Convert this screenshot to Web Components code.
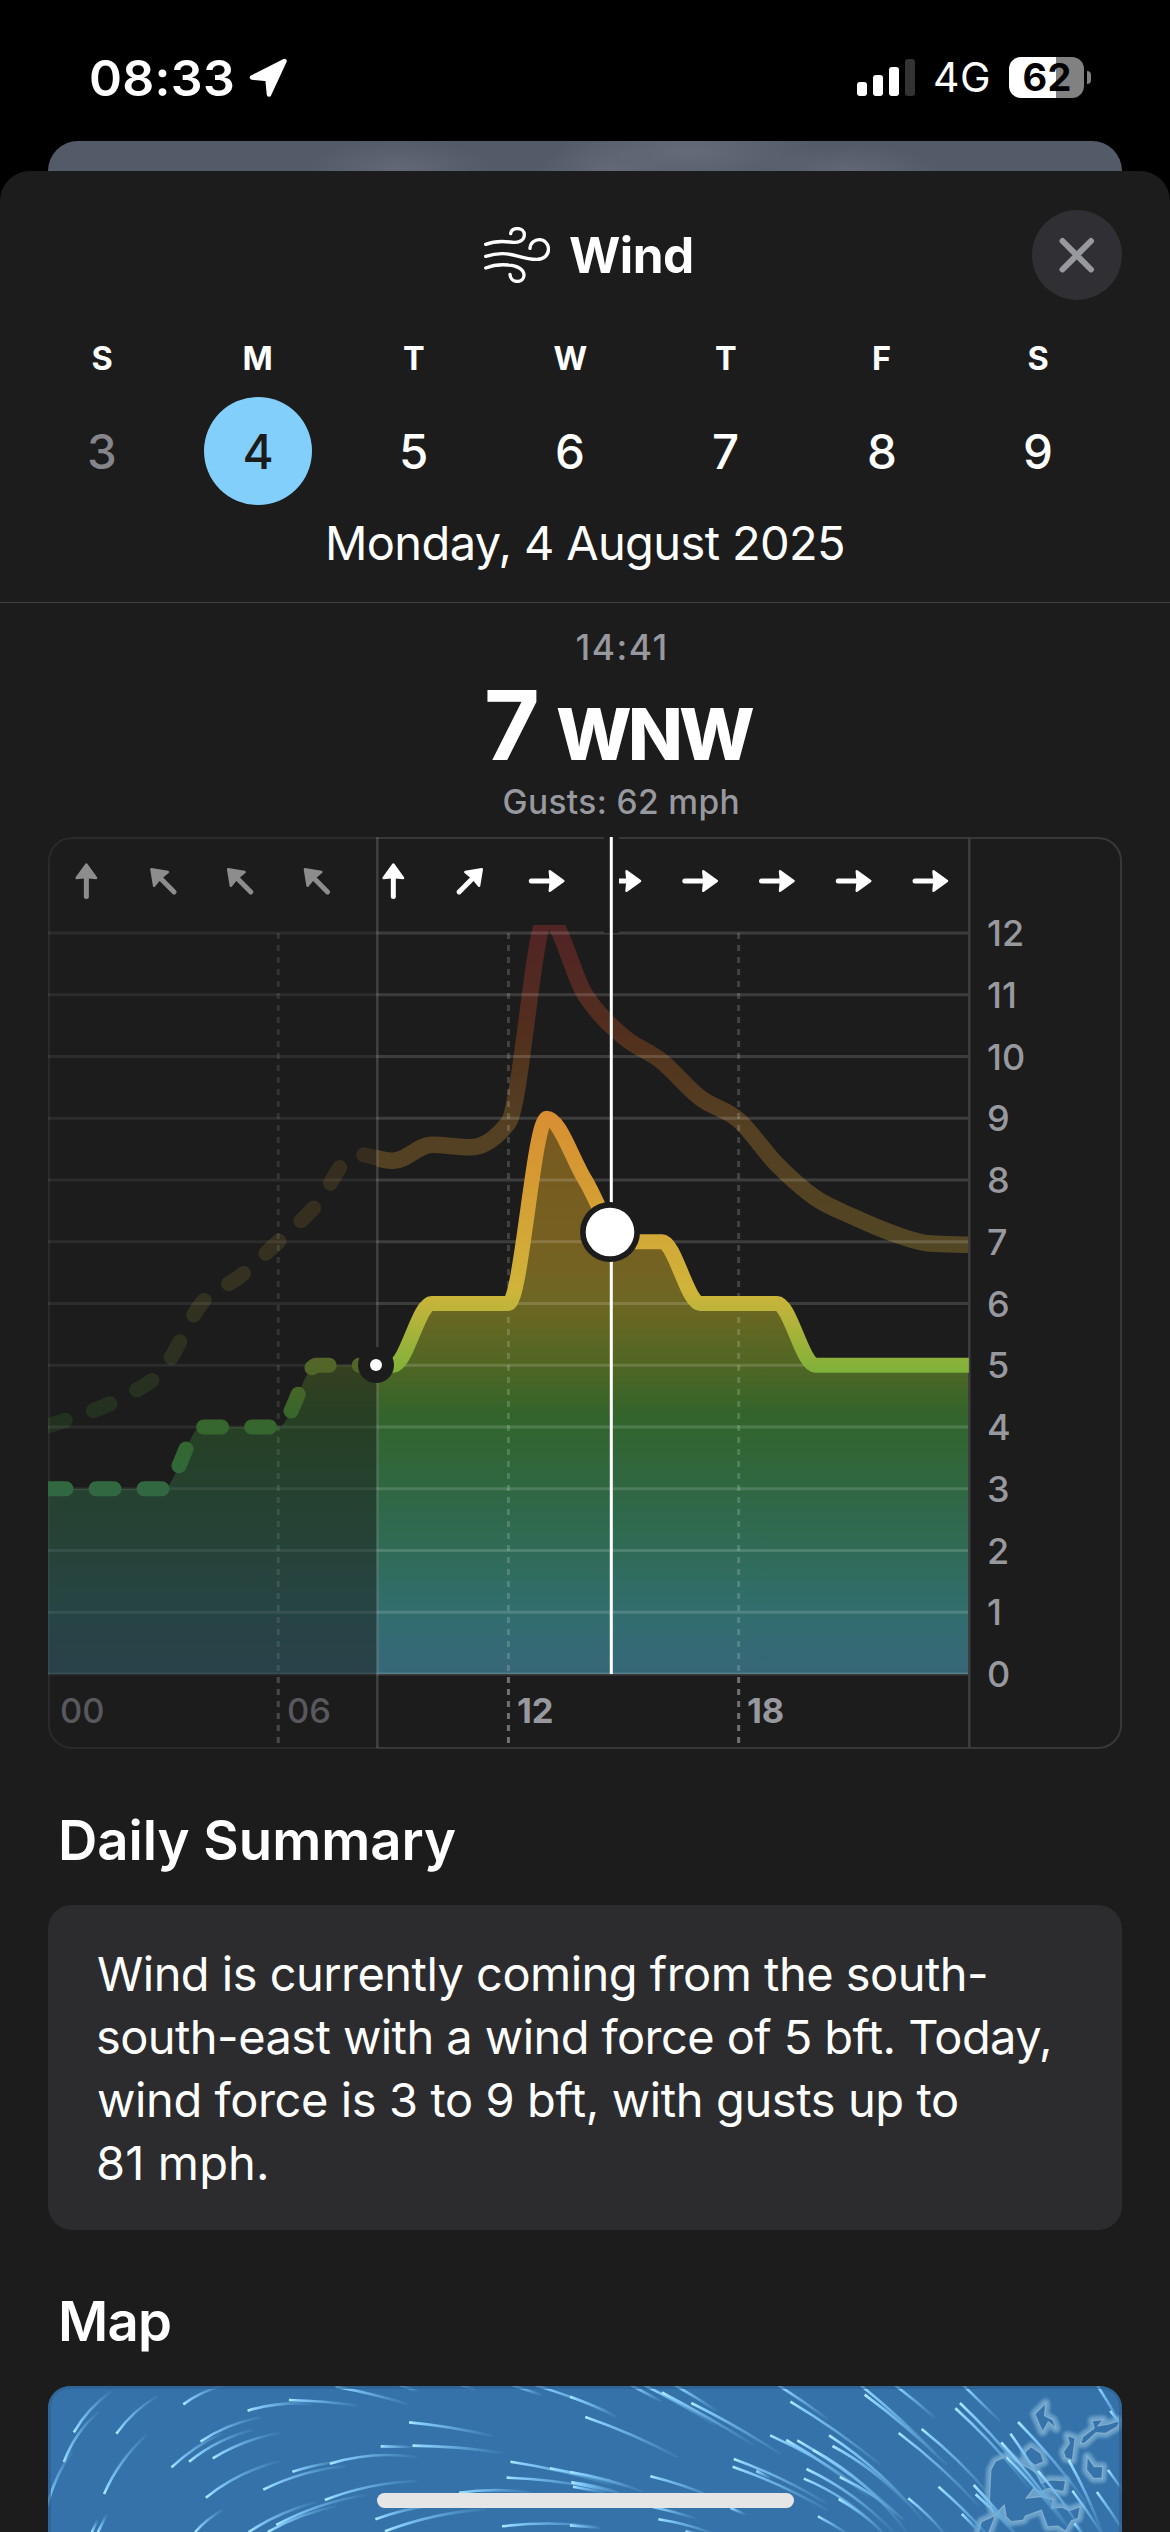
<!DOCTYPE html>
<html lang="en">
<head>
<meta charset="utf-8">
<title>Wind</title>
<style>
html,body{margin:0;background:#000;}
body{width:1170px;height:2532px;overflow:hidden;font-family:Inter,"Liberation Sans",sans-serif;color:#fff;}
</style>
</head>
<body>
<wind-screen></wind-screen>
<script>
const FONT = 'Inter,"Liberation Sans",sans-serif';
const ctx = document.createElement('canvas').getContext('2d');
const define = (name, html, setup) => customElements.define(name, class extends HTMLElement {
  constructor() { super(); this.attachShadow({mode: 'open'}); }
  connectedCallback() {
    if (this.shadowRoot.childNodes.length) return;
    this.shadowRoot.innerHTML = html;
    if (setup) setup(this, this.shadowRoot);
  }
});

/* One line of text, tracked so that its ink is exactly w pixels wide. */
customElements.define('fit-text', class extends HTMLElement {
  connectedCallback() {
    if (this.shadowRoot) return;
    const a = (n, d) => this.getAttribute(n) || d;
    const size = +a('size', 40), weight = a('weight', '400'), w = +a('w', 0), lh = +a('lh', size);
    const text = a('text', '');
    ctx.font = `${weight} ${size}px ${FONT}`;
    const m = ctx.measureText(text);
    const ink = m.actualBoundingBoxLeft + m.actualBoundingBoxRight;
    const ls = w && text.length > 1 ? (w - ink) / (text.length - 1) : 0;
    this.attachShadow({mode: 'open'}).innerHTML = `<style>
      :host{display:block;flex:none;width:${w || ink}px;height:${lh}px;line-height:${lh}px;white-space:pre;
        font-size:${size}px;font-weight:${weight};letter-spacing:${ls}px}
      span{display:block;margin-left:${m.actualBoundingBoxLeft}px}</style><span></span>`;
    this.shadowRoot.querySelector('span').textContent = text;
  }
});

define('status-bar', `<style>
  :host{display:flex;height:141px;box-sizing:border-box;padding:57px 79px 0 91px}
  .l,.r{display:flex;height:41px;align-items:center}
  .l{gap:15px}.r{margin-left:auto}
  .bars{margin-right:20px}
  .bat{margin-left:20px;display:grid;width:75px;height:41px;border-radius:12px;place-items:center;
    background:linear-gradient(90deg,#fff 47px,#818181 47px);color:#000}
  .nub{margin-left:3px;width:4px;height:13px;border-radius:0 5px 5px 0;background:#818181}
  </style>
  <div class="l"><fit-text text="08:33" size="50" weight="600" w="142" lh="42"></fit-text>
  <svg width="40" height="41" viewBox="0 0 40 41"><path d="M36.5 4 L4 20.5 L19.5 22 L21 37.5 Z" fill="#fff" stroke="#fff" stroke-width="4.5" stroke-linejoin="round"/></svg></div>
  <div class="r"><svg class="bars" width="58" height="41" viewBox="0 0 58 41"><g fill="#fff"><rect x="0" y="25" width="10" height="14" rx="3"/><rect x="16" y="18" width="10" height="21" rx="3"/><rect x="32" y="10" width="10" height="29" rx="3"/><rect x="48" y="2" width="10" height="37" rx="3" fill="#333"/></g></svg>
  <fit-text text="4G" size="41" weight="400" w="54" lh="43"></fit-text>
  <div class="bat"><fit-text text="62" size="38" weight="700" w="46" lh="41"></fit-text></div><div class="nub"></div></div>`);

define('sheet-header', `<style>
  :host{display:flex;align-items:center;height:90px;padding:39px 48px 0 484px}
  .t{margin-left:20px}
  .x{margin-left:auto;width:90px;height:90px;border-radius:50%;background:#303034}
  svg{display:block}
  </style>
  <svg width="66" height="56" viewBox="42 54 198 168" fill="none" stroke="#fff" stroke-width="10" stroke-linecap="round">
  <path d="M47 106C75 95 96 96 120 99C147 103 163 94 163 77C163 66 154 58.7 142 58.7C131 58.7 123 64 122 74"/>
  <path d="M47 142C85 130 112 132 146 142C170 149 185 151 200 151C222 151 235.500 138 235.500 120C235.500 104 223 92 208 92C193 92 181 102 180 118"/>
  <path d="M47 177C72 167 95 166 115 168C145 170 162 183 162 199C162 210 153 217.300 142 217.300C130 217.300 121 209 120 196"/></svg>
  <fit-text class="t" text="Wind" size="49.500" weight="700" w="122" lh="91"></fit-text>
  <div class="x"><svg viewBox="0 0 90 90" stroke="#98989f" stroke-width="6" stroke-linecap="round"><path d="M30.500 31L59 59.500M59 31L30.500 59.500"/></svg></div>`);

define('week-strip', `<style>
  :host{display:block}
  .g{display:grid;grid-template-columns:repeat(7,156px);margin-left:24px;justify-items:center}
  .w{margin-top:38px}
  .d{margin-top:18px}
  .c{width:108px;height:108px;border-radius:50%;display:grid;place-items:center}
  .past{color:#85858a}.on{background:#83cffb;color:#1c1c1c}
  .date{margin:13px 0 34px 329px}
  hr{margin:0;border:0;height:1px;background:#414143}
  </style><div class="g w"></div><div class="g d"></div>
  <fit-text class="date" text="Monday, 4 August 2025" size="47" weight="400" w="514" lh="50"></fit-text><hr>`,
  (el, r) => {
    r.querySelector('.w').innerHTML = [...'SMTWTFS'].map(c => `<fit-text text="${c}" size="32.500" weight="700" lh="41"></fit-text>`).join('');
    r.querySelector('.d').innerHTML = [...'3456789'].map((c, i) => `<div class="c ${i == 0 ? 'past' : i == 1 ? 'on' : ''}"><fit-text text="${c}" size="47.500" weight="450" lh="109"></fit-text></div>`).join('');
  });

define('wind-readout', `<style>
  :host{display:flex;flex-direction:column;align-items:center;padding:25px 0 15px 71px}
  .time,.g{color:#98989f}
  .v{display:flex;align-items:flex-end;gap:19px;height:70px;margin:22px 0 22px}
  </style><fit-text class="time" text="14:41" size="35.500" weight="500" w="88" lh="40"></fit-text>
  <div class="v"><fit-text text="7" size="96" weight="750" w="51" lh="70"></fit-text><fit-text text="WNW" size="71.500" weight="800" w="197" lh="52"></fit-text></div>
  <fit-text class="g" text="Gusts: 62 mph" size="33.500" weight="500" w="234" lh="40"></fit-text>`);

/* Monotone cubic through [x,y] points. */
function curve(p) {
  const n = p.length, d = [], m = [];
  for (let i = 0; i < n - 1; i++) d.push((p[i+1][1] - p[i][1]) / (p[i+1][0] - p[i][0]));
  m[0] = d[0]; m[n-1] = d[n-2];
  for (let i = 1; i < n - 1; i++) {
    m[i] = d[i-1] * d[i] <= 0 ? 0 : Math.sign(d[i]) * Math.min(Math.abs(d[i-1]), Math.abs(d[i]), Math.abs(d[i-1] + d[i]) / 4) * 2;
  }
  let s = `M${p[0][0]} ${p[0][1]}`;
  for (let i = 0; i < n - 1; i++) {
    const h = (p[i+1][0] - p[i][0]) / 3;
    s += `C${p[i][0] + h} ${p[i][1] + m[i]*h} ${p[i+1][0] - h} ${p[i+1][1] - m[i+1]*h} ${p[i+1][0]} ${p[i+1][1]}`;
  }
  return s;
}

define('wind-chart', `<style>
  :host{display:block;height:912px;margin:0 48px}
  svg{display:block;font-family:${FONT}}
  </style><div></div>`, (el, r) => {
  const X = h => 48 + 38.37 * h, Y = v => 1674 - 61.75 * v;
  const wind = [3,3,3,3,4,4,4,5,5,5,6,6,6,9,8,7,7,6,6,6,5,5,5,5,5];
  const gust = [4.02,4.22,4.5,4.93,6,6.44,7,7.6,8.42,8.31,8.57,8.53,8.93,12.27,11,10.32,9.92,9.33,8.97,8.25,7.71,7.4,7.14,6.97,6.95];
  const wp = curve(wind.map((v, i) => [X(i), Y(v)])), gp = curve(gust.map((v, i) => [X(i), Y(v)]));
  const sorted = o => Object.entries(o).sort((a, b) => b[0] - a[0]).map(([v, c]) => `<stop offset="${1 - v / 13}" stop-color="${c}"/>`).join('');
  const grad = (id, o) => `<linearGradient id="${id}" gradientUnits="userSpaceOnUse" x1="0" y1="${Y(13)}" x2="0" y2="${Y(0)}">${sorted(o)}</linearGradient>`;
  let grid = '', dash = '', labels = '';
  for (let v = 0; v <= 12; v++) {
    const y = Y(v);
    grid += `<path d="M48 ${y}H377" stroke="#fff" stroke-opacity=".075"/><path d="M377 ${y}H969" stroke="#fff" stroke-opacity=".15"/>`;
    labels += `<text x="987" y="${y + 13}">${v}</text>`;
  }
  for (const h of [6, 12, 18]) {
    dash += `<path d="M${X(h)} 933V1674" stroke="#fff" stroke-opacity="${h == 6 ? .1 : .17}"/><path d="M${X(h)} 1677V1743" stroke="#fff" stroke-opacity="${h == 6 ? .2 : .38}"/>`;
  }
  let arrows = '';
  [0,-45,-45,-45,0,45,90,90,90,90,90,90].forEach((a, i) => {
    const c = i < 4 ? '#8d8d8d' : '#fff';
    arrows += `<g transform="translate(${X(2*i+1)} 881) rotate(${a})" fill="${c}" stroke="${c}" stroke-linecap="round" stroke-linejoin="round"><path d="M0 15.500V-8" stroke-width="5" fill="none"/><path d="M0 -16.500L9.700 -3L0 -4L-9.700 -3Z" stroke-width="2.500"/></g>`;
  });
  r.querySelector('div').innerHTML = `<svg width="1074" height="912" viewBox="48 837 1074 912">
  <defs>
  ${grad('line', {13:'#d03737',12:'#d03737',11:'#d04d2f',10.4:'#d25a20',10:'#cf6d20',9:'#d89032',8:'#d59a33',7:'#d2a937',6.2:'#cfb43a',6:'#c4b43a',5:'#86b13a',4.2:'#4eb03c',3.8:'#45b04a',3:'#42b367',0:'#50b0d0'})}
  ${grad('dimline', {13:'#765520',7:'#776322',5:'#526628',4.8:'#4c6626',4.2:'#38662b',3.8:'#33672f',3:'#316841',0:'#306070'})}
  ${grad('fill', {13:'#76551f',9:'#76591f',8:'#775c20',7:'#766021',6.2:'#706624',5.8:'#686722',5:'#506624',4.2:'#33642b',4:'#31652f',3:'#2f6742',2:'#306b57',1.1:'#316e6c',0.5:'#346a74',0:'#376777'})}
  <clipPath id="past"><path d="M48 837H377.300V1749H48Z"/></clipPath>
  <clipPath id="next"><path d="M377.300 837H969V1749H377.300Z"/></clipPath>
  <clipPath id="top"><path d="M48 925H1122V1749H48Z"/></clipPath>
  <clipPath id="nextB"><path d="M377.300 837H1122V1749H377.300Z"/></clipPath>
  </defs>
  <rect x="49" y="838" width="1072" height="910" rx="23" fill="none" stroke="#2a2a2c" stroke-width="2" clip-path="url(#past)"/>
  <rect x="49" y="838" width="1072" height="910" rx="23" fill="none" stroke="#38383a" stroke-width="2" clip-path="url(#nextB)"/>
  <path d="${wp}V1674H48Z" fill="url(#fill)" clip-path="url(#past)" opacity=".49"/>
  <path d="${wp}V1674H48Z" fill="url(#fill)" clip-path="url(#next)"/>
  <g clip-path="url(#top)"><g fill="none" stroke="url(#line)" stroke-width="16.500">
  <path d="${gp}" clip-path="url(#past)" stroke-width="15" stroke-dasharray="18 30" stroke-linecap="round" opacity=".14"/>
  <path d="${gp}" clip-path="url(#next)" opacity=".3"/></g></g>
  <g stroke-width="3">${grid}</g>
  <g stroke-width="3" stroke-dasharray="6 6">${dash}</g>
  <path d="M969.300 837V1748" stroke="#3d3d40" stroke-width="2.500"/>
  <path d="M377.300 837V1748" stroke="#fff" stroke-opacity=".16" stroke-width="2.500"/>
  <g fill="none" stroke-width="15">
  <path d="${wp}" clip-path="url(#past)" stroke-dasharray="18 30" stroke-linecap="round" stroke="url(#dimline)"/>
  <path d="${wp}" clip-path="url(#next)" stroke="url(#line)"/></g>
  ${arrows}
  <path d="M604 837H619V933H604Z" fill="#1c1c1c"/>
  <path d="M611.300 837V1674" stroke="#fff" stroke-width="3"/>
  <circle cx="376" cy="1365" r="18" fill="#1c1c1c"/><circle cx="376" cy="1365" r="6" fill="#fff"/>
  <circle cx="610" cy="1232" r="30" fill="#1c1c1c"/><circle cx="610" cy="1232" r="24.300" fill="#fff"/>
  <g fill="#98989f" font-size="36" font-weight="550">${labels}</g>
  <g fill="#98989f" font-size="34.500" font-weight="650"><text x="60" y="1722.500" fill="#58585d" font-weight="550">00</text><text x="287" y="1722.500" fill="#58585d" font-weight="550">06</text><text x="517" y="1722.500">12</text><text x="747" y="1722.500">18</text></g>
  </svg>`;
});

define('section-title', `<style>:host{display:block;padding:61px 0 35px 61px}</style><slot></slot>`);

define('summary-card', `<style>
  :host{display:block;box-sizing:border-box;margin:0 48px;height:325px;padding:37px 50px 0;border-radius:24px;background:#2c2c2e}
  </style><slot></slot>`);

define('wind-map', `<style>
  :host{display:block;height:146px;margin:0 48px;border-radius:22px 22px 0 0;overflow:hidden;background:#3472a9}
  svg{display:block}
  </style><div></div>`, (el, r) => {
  const W = 600 / 1568;
  /* Wind streaks: head x,y, tail x,y, bend; the two tiles have their own origin. */
  const left = [
    [193,487,290,365,-6],[167,576,258,425,-8],[120,720,190,540,-6],[304,491,412,378,-6],[272,672,385,493,-8],[479,403,590,346,-5],
    [647,422,815,402,-6],[755,390,935,407,-2],[877,350,1065,402,-2],[524,515,682,442,-7],[448,592,580,490,-5],[494,575,662,479,-8],[556,565,730,489,-7],
    [538,683,730,574,-9],[764,605,880,575,-2],[862,581,1090,562,-10],[688,659,905,588,-8],[849,690,1090,633,-8],[722,765,955,675,-8],[650,786,825,697,-6],
    [700,786,880,708,-6],[1069,457,1287,498,-3],[995,529,1080,531,0],[1078,527,1310,548,-3],[981,748,1135,706,-4],[1006,784,1270,718,-8],[510,786,583,719,-3],
    [1312,769,1560,770,-6],[1334,575,1600,645,-4],[1437,595,1640,650,-2],[1324,623,1560,655,-4],[1493,637,1620,668,-2],[1200,668,1390,668,-5],
    [1400,346,1590,425,-2],[1045,346,1090,362,0],[1340,346,1415,375,0],[1205,346,1242,358,0],[240,786,255,750,0],[256,786,279,733,0]];
  const right = [
    [0,380,122,441,-2],[160,346,240,395,0],[195,346,380,465,-2],[240,367,480,525,-2],[317,399,550,552,-3],[275,346,382,422,-1],[576,395,812,585,-4],[545,346,675,448,-1],
    [40,441,282,562,-4],[523,496,740,635,-4],[565,510,780,680,-4],[594,511,870,748,-8],[635,540,880,786,-14],[677,496,920,748,-10],[686,528,880,700,-8],[770,374,985,585,-4],[760,346,955,550,-3],[850,346,955,445,-1],
    [859,489,1070,710,-5],[919,477,1100,680,-5],[428,567,670,700,-5],[425,590,675,722,-5],[487,603,525,625,0],[618,597,845,786,-10],[611,626,815,786,-10],[705,621,870,748,-6],[702,687,820,790,-4],
    [210,619,380,685,-3],[231,748,380,793,-3],[215,710,328,745,-1],[648,739,730,795,-1],[302,784,330,790,0],[884,685,985,800,-3],[1019,399,1220,660,-5],[1007,415,1200,655,-5],[1028,346,1125,455,0],
    [1171,456,1350,700,-4],[1151,491,1270,720,-4],[1127,517,1310,786,-4],[1141,562,1290,760,-3],[1223,603,1340,786,-3],[1303,570,1390,786,-3],[1378,346,1442,470,-1],[1412,423,1450,480,0],[1406,600,1450,670,0],
    [1377,666,1450,790,-1],[1313,662,1395,800,-1],[1318,760,1345,800,0],[963,650,1110,820,-3],[1055,645,1170,800,-2],[1060,673,1165,795,-2],[1024,732,1075,795,-1],[0,606,190,665,-4],[5,638,125,668,0],[8,650,95,668,0],[0,766,80,774,0],[420,714,458,733,0]];
  let g = '', s = '', id = 0;
  const add = (list, ox) => list.forEach(([a, b, c, d, bend]) => {
    const x1 = ox + a * W, y1 = 2270 + b / 3, x2 = ox + c * W, y2 = 2270 + d / 3;
    const L = Math.hypot(x2 - x1, y2 - y1) || 1;
    const qx = (x1 + x2) / 2 - (y2 - y1) / L * bend, qy = (y1 + y2) / 2 + (x2 - x1) / L * bend;
    id++;
    g += `<linearGradient id="s${id}" gradientUnits="userSpaceOnUse" x1="${x1}" y1="${y1}" x2="${x2}" y2="${y2}"><stop offset="0" stop-color="#b0eaff"/><stop offset=".1" stop-color="#8ad2ff"/><stop offset=".5" stop-color="#6cb4e6" stop-opacity=".8"/><stop offset="1" stop-color="#5a9fd0" stop-opacity=".15"/></linearGradient>`;
    s += `<path d="M${x1} ${y1}Q${qx} ${qy} ${x2} ${y2}" stroke="url(#s${id})"/>`;
  });
  add(left, 0); add(right, 570);
  const land = ['1243,400 1240,437 1262,450 1270,475 1250,455 1235,485 1215,432','1335,520 1340,500 1370,475 1365,452 1393,450 1380,468 1410,462 1440,450 1430,470 1400,490 1375,488 1345,520','1300,497 1320,505 1313,570 1295,563 1290,545 1305,520','1352,560 1370,590 1392,590 1390,625 1368,625 1350,600',
    '1090,800 1065,800 1075,755 1105,740 1135,705 1140,740 1153,755 1185,750 1190,738 1232,720 1248,770 1275,768 1295,783 1310,752 1328,745 1333,710 1305,722 1285,712 1258,715 1262,690 1230,680 1192,685 1212,655 1230,665 1250,655 1290,665 1295,632 1255,630 1232,640 1222,612 1200,595 1165,575 1145,558 1112,574 1100,600 1096,690 1110,742','1190,545 1205,530 1230,550 1238,575 1215,586 1190,565']
    .map(t => `<polygon points="${t.split(' ').map(q => { const [x, y] = q.split(','); return (570 + x * W).toFixed(1) + ',' + (2270 + y / 3).toFixed(1); }).join(' ')}"/>`).join('');
  r.querySelector('div').innerHTML = `<svg width="1074" height="146" viewBox="48 2386 1074 146"><defs>${g}<filter id="b" x="-10%" y="-20%" width="120%" height="140%"><feGaussianBlur stdDeviation="1.600"/></filter></defs>
   <g fill="none" stroke="#80b2d4" stroke-width="9" stroke-linejoin="round" opacity=".75" filter="url(#b)">${land}</g>
   <g fill="#3573aa" stroke="#a5cbe0" stroke-opacity=".55" stroke-width="1.200">${land}</g>
   <g fill="none" stroke-width="2.600">${s}</g>
   <path d="M49.500 2540V2409Q49.500 2387.500 71 2387.500H1099Q1120.500 2387.500 1120.500 2409V2540" fill="none" stroke="#2c5f8d" stroke-opacity=".65" stroke-width="3"/></svg>`;
});

define('wind-screen', `<style>
  :host{display:block;width:1170px;height:2532px;position:relative;overflow:hidden;background:#000}
  .back{height:30px;margin:0 48px;border-radius:30px 30px 0 0;
    background:radial-gradient(ellipse 90px 30px at 350px 28px,#626875,transparent),radial-gradient(ellipse 130px 40px at 640px 10px,#656b78,transparent),radial-gradient(ellipse 90px 26px at 800px 30px,#616774,transparent),radial-gradient(ellipse 70px 30px at 560px 30px,#626875,transparent),#545b68}
  .sheet{background:#1c1c1c;border-radius:30px 30px 0 0;height:2361px}
  .home{position:absolute;left:377px;top:2493px;width:417px;height:15px;border-radius:8px;background:#e5e5e5}
  </style>
  <status-bar></status-bar><div class="back"></div>
  <div class="sheet">
    <sheet-header></sheet-header><week-strip></week-strip><wind-readout></wind-readout><wind-chart></wind-chart>
    <section-title><fit-text text="Daily Summary" size="54.500" weight="600" w="395" lh="60"></fit-text></section-title>
    <summary-card>
      <fit-text text="Wind is currently coming from the south-" size="47" w="888" lh="63"></fit-text>
      <fit-text text="south-east with a wind force of 5 bft. Today," size="47" w="951" lh="63"></fit-text>
      <fit-text text="wind force is 3 to 9 bft, with gusts up to" size="47" w="859" lh="63"></fit-text>
      <fit-text text="81 mph." size="47" w="168" lh="63"></fit-text>
    </summary-card>
    <section-title><fit-text text="Map" size="54.500" weight="600" w="109" lh="60"></fit-text></section-title>
    <wind-map></wind-map>
  </div>
  <div class="home"></div>`);
</script>
</body>
</html>
